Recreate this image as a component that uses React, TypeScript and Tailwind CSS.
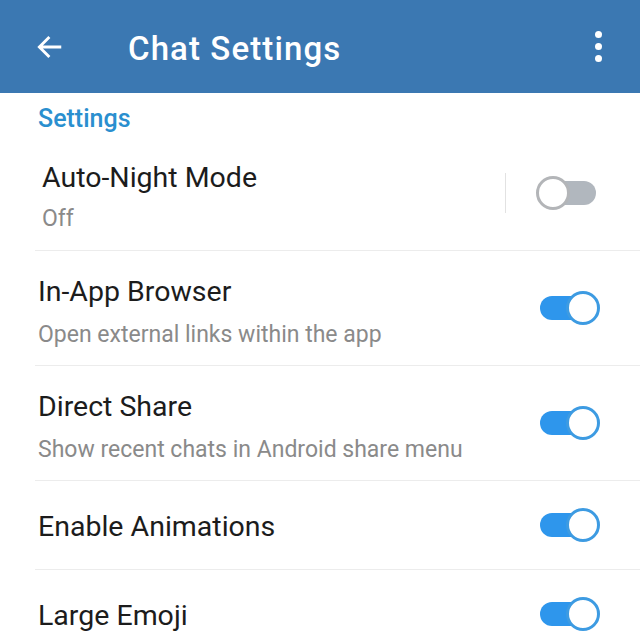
import React from 'react';

const Toggle = ({ on }: { on: boolean }) => (
  <div className="relative w-[60px] h-[34px] flex items-center">
    <div className={`h-[24px] w-[56px] ml-[2px] rounded-full ${on ? 'bg-[#2e96ec]' : 'bg-[#b1b7be]'}`} />
    <div
      className={`absolute top-0 w-[34px] h-[34px] rounded-full bg-white border-[3px] ${
        on ? 'right-[-2px] border-[#3d9be2]' : 'left-[-2px] border-[#b3b5b8]'
      }`}
    />
  </div>
);

const rows = [
  { title: 'In-App Browser', sub: 'Open external links within the app' },
  { title: 'Direct Share', sub: 'Show recent chats in Android share menu' },
  { title: 'Enable Animations' },
  { title: 'Large Emoji' },
];

export default function App() {
  return (
    <div className="w-[640px] h-[640px] overflow-hidden bg-white font-['Roboto',sans-serif]">
      {/* toolbar */}
      <div className="h-[93px] bg-[#3b78b2] flex items-center pl-[35px] pr-[38px] text-white">
        <svg width="30" height="30" viewBox="0 0 24 24" fill="none" stroke="white" strokeWidth="2.3">
          <path d="M21 12H3.5M11.5 4L3.5 12L11.5 20" />
        </svg>
        <div className="ml-[63px] text-[33px] font-medium tracking-[1.1px] leading-none mt-[3px]">Chat Settings</div>
        <div className="ml-auto flex flex-col gap-[5px] items-center">
          <span className="w-[7px] h-[7px] rounded-full bg-white" />
          <span className="w-[7px] h-[7px] rounded-full bg-white" />
          <span className="w-[7px] h-[7px] rounded-full bg-white" />
        </div>
      </div>

      <div className="h-[42px] pl-[38px] pt-[11px] text-[25px] font-medium text-[#2a8fcf] leading-[30px]">Settings</div>

      {/* auto-night */}
      <div className="ml-[35px] h-[116px] flex items-center pl-[7px] pr-[42px] border-b border-[#ececec]">
        <div className="flex-1 self-start pt-[26px]">
          <div className="text-[28.5px] text-[#1c1c1c] leading-[34px]">Auto-Night Mode</div>
          <div className="text-[23px] text-[#8a8a8a] leading-[28px] mt-[10px]">Off</div>
        </div>
        <div className="w-px h-[40px] bg-[#e2e2e2] mr-[32px]" />
        <Toggle on={false} />
      </div>

      {rows.map((r) => (
        <div
          key={r.title}
          className={`ml-[35px] flex items-center pl-[3px] pr-[42px] border-b border-[#ececec] ${r.sub ? 'h-[115px]' : 'h-[89px]'}`}
        >
          <div className={`flex-1 self-start ${r.sub ? 'pt-[24px]' : 'pt-[29px]'}`}>
            <div className="text-[28.5px] text-[#1c1c1c] leading-[34px]">{r.title}</div>
            {r.sub && <div className="text-[23px] text-[#8a8a8a] leading-[28px] mt-[12px]">{r.sub}</div>}
          </div>
          <Toggle on />
        </div>
      ))}
    </div>
  );
}
